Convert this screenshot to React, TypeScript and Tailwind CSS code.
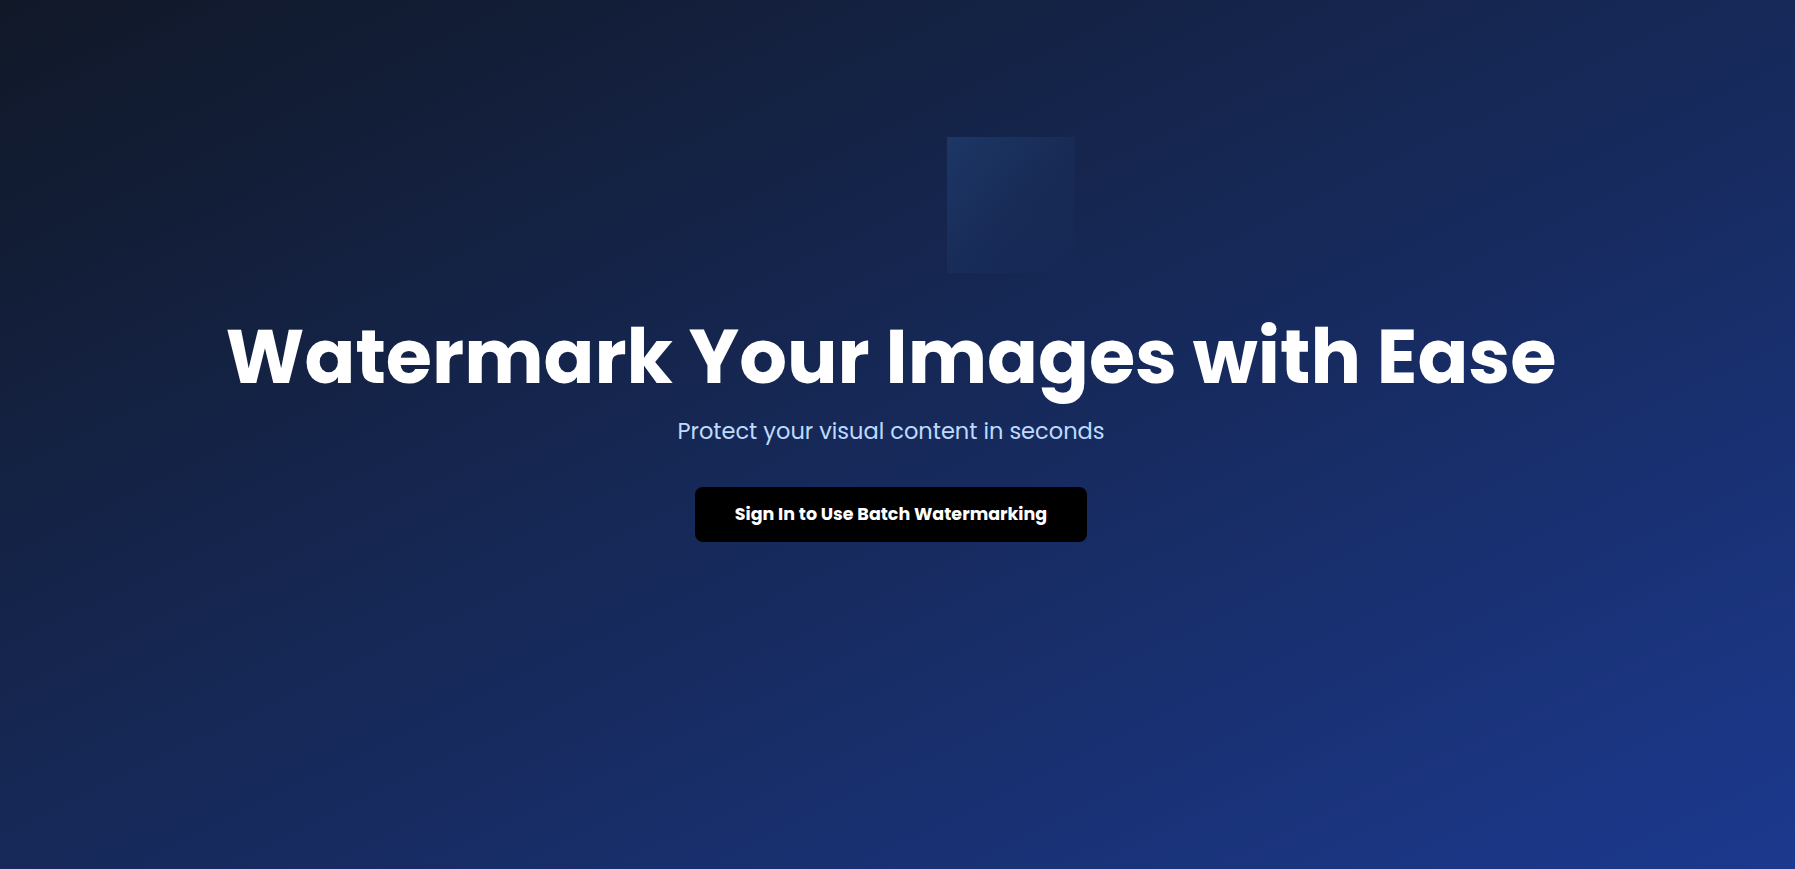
import React from 'react';

const App: React.FC = () => {
  return (
    <div
      className="relative min-h-screen w-full overflow-hidden bg-gradient-to-br from-gray-900 to-blue-900 flex items-center justify-center"
      style={{ fontFamily: 'Poppins, Inter, "Noto Sans", sans-serif' }}
    >
      <div className="absolute left-[947px] top-[137px] w-32 h-[136px] bg-gradient-to-br from-blue-400/15 via-blue-400/5 to-transparent pointer-events-none" />
      <section className="relative text-center pr-[13px] pb-[18px]">
        <h1 className="text-[75px] font-bold text-white leading-tight">
          Watermark Your Images with Ease
        </h1>
        <p className="mt-3 text-[22.5px] leading-8 text-blue-200">Protect your visual content in seconds</p>
        <button className="mt-10 px-10 py-3.5 bg-black text-white text-[17.5px] font-bold rounded-lg">
          Sign In to Use Batch Watermarking
        </button>
      </section>
    </div>
  );
};

export default App;
